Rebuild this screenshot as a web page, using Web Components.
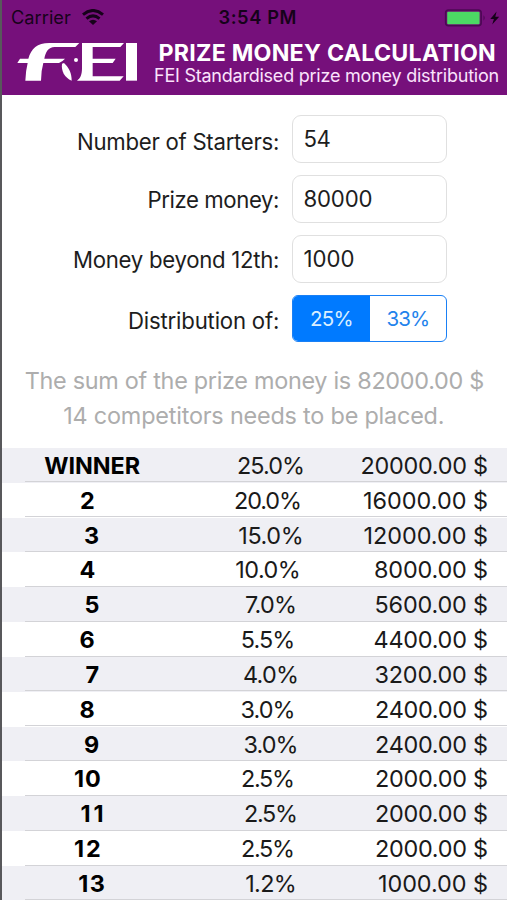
<!DOCTYPE html>
<html lang="en">
<head>
<meta charset="utf-8">
<title>Prize Money Calculation</title>
<style>
html,body{margin:0;padding:0;background:#fff}
body{width:507px;height:900px;overflow:hidden;font-family:Inter,"Liberation Sans",sans-serif}
</style>
</head>
<body>
<prize-app></prize-app>
<script>
const pen = document.createElement('canvas').getContext('2d');

/* A single line of text tracked so that its ink spans exactly `w` pixels. */
class FitText extends HTMLElement {
  connectedCallback() {
    if (this.shadowRoot) return;
    const size = +this.getAttribute('size'), weight = this.getAttribute('weight') || 400;
    const text = this.textContent, n = text.length;
    pen.font = `${weight} ${size}px Inter, "Liberation Sans", sans-serif`;
    const m = pen.measureText(text);
    const ink = m.actualBoundingBoxLeft + m.actualBoundingBoxRight;
    const w = this.hasAttribute('w') ? +this.getAttribute('w') : ink;
    const track = n > 1 ? (w - ink) / (n - 1) : 0;
    this.attachShadow({mode: 'open'}).innerHTML = `<style>
      :host{display:block;flex:none;width:${w}px;white-space:nowrap;font-size:${size}px;font-weight:${weight}}
      span{display:block;width:max-content;margin-left:${m.actualBoundingBoxLeft}px;letter-spacing:${track.toFixed(3)}px;font-kerning:normal}
    </style><span><slot></slot></span>`;
  }
}
customElements.define('fit-text', FitText);

class StatusBar extends HTMLElement {
  connectedCallback() {
    this.attachShadow({mode: 'open'}).innerHTML = `<style>
      :host{display:grid;grid-template-columns:1fr auto 1fr;align-items:center;height:35px;padding:0 6px 0 12px;color:#16021a;line-height:35px}
      .l,.r{display:flex;align-items:center}
      .l{gap:11px}.r{justify-content:flex-end}
      svg{display:block}
      .l svg{margin-top:-1px}
      .t{margin-left:1px}
    </style>
    <div class="l"><fit-text size="18.200" w="59">Carrier</fit-text>
      <svg width="22" height="17" viewBox="0 0 22 17" fill="none" stroke="#16021a" stroke-width="3"><path d="M1 5.600Q11-2.600 21 5.600M4.500 9.600Q11 4.200 17.500 9.600"/><path d="M7 12.200Q11 9.200 15 12.200L11 16Z" fill="#16021a" stroke="none"/></svg></div>
    <fit-text class="t" size="18.300" weight="600" w="77">3:54 PM</fit-text>
    <div class="r"><svg width="57" height="18" viewBox="0 0 57 18">
      <rect x="1.600" y="1.100" width="35.600" height="15.600" rx="3" fill="#6f0e73" stroke="#4c0854" stroke-width="1.500"/>
      <rect x="3.200" y="2.800" width="32.400" height="12.400" rx="1" fill="#4cd964"/>
      <path d="M39.500 6.300q2.400 2.700 0 5.400z" fill="#4c0854"/>
      <path d="M52.600 2.500L46.300 10h3.600l-1.700 5.500L55.200 7.800h-3.900z" fill="#16021a"/>
    </svg></div>`;
  }
}
customElements.define('status-bar', StatusBar);

class FeiLogo extends HTMLElement {
  connectedCallback() {
    this.attachShadow({mode: 'open'}).innerHTML = `<style>:host{display:block;width:122px;height:40px}svg{display:block}</style>
    <svg width="122" height="40" viewBox="48 122 366 120" fill="#fff" role="img" aria-label="FEI">
      <path d="M52 188L60 175H85C94 145 111 128 148 128H238L226 140H164C145 140 137 155 133 175H195Q187 184 177 188H130Q123 212 123 241H76Q77 212 83 188Z"/>
      <path d="M186 190C183 212 194 232 215 241C215 217 206 202 192 188Z"/>
      <circle cx="228" cy="179" r="6"/>
      <path d="M246 128H372L361 140H278V175H347L338 188H278V228H371L359 241H231C242 234 246 221 246 204Z"/>
      <path d="M378 128H411V241H378Z"/>
    </svg>`;
  }
}
customElements.define('fei-logo', FeiLogo);

class TopBanner extends HTMLElement {
  connectedCallback() {
    this.attachShadow({mode: 'open'}).innerHTML = `<style>
      :host{display:block;height:95px;background:#76107b;color:#fff}
      .b{display:flex;padding-left:16px}
      fei-logo{margin-top:6px}
      .x{margin-left:17px;padding-top:5px}
      .x fit-text:first-child{line-height:27px;margin-left:4.500px}
      .x fit-text:last-child{line-height:21px;margin-top:-2px;color:#fbe3fc}
    </style>
    <status-bar></status-bar>
    <div class="b"><fei-logo></fei-logo><div class="x">
      <fit-text size="23.200" weight="650" w="335.500">PRIZE MONEY CALCULATION</fit-text>
      <fit-text size="18" w="343.500">FEI Standardised prize money distribution</fit-text>
    </div></div>`;
  }
}
customElements.define('top-banner', TopBanner);

class FormRow extends HTMLElement {
  connectedCallback() {
    this.attachShadow({mode: 'open'}).innerHTML = `<style>
      :host{display:grid;grid-template-columns:278px 155px;column-gap:14px;height:48px;line-height:48px;color:#1d1d1d}
      .l{display:flex;justify-content:flex-end;position:relative;top:var(--drop,0)}
    </style><div class="l"><slot name="label"></slot></div><slot></slot>`;
  }
}
customElements.define('form-row', FormRow);

class NumberField extends HTMLElement {
  connectedCallback() {
    this.attachShadow({mode: 'open'}).innerHTML = `<style>
      :host{display:block;box-sizing:border-box;height:48px;border:1.500px solid #e0e0e0;border-radius:9px;padding-left:11.500px;line-height:45px;background:#fff}
    </style><slot></slot>`;
  }
}
customElements.define('number-field', NumberField);

class SegmentPicker extends HTMLElement {
  connectedCallback() {
    this.attachShadow({mode: 'open'}).innerHTML = `<style>
      :host{display:grid;grid-template-columns:1fr 1fr;box-sizing:border-box;height:47px;border:1.500px solid #1a80f5;border-radius:6px;overflow:hidden;line-height:45px;color:#1f83ec}
      div{display:flex;justify-content:center}
      .on{background:#007aff;color:#d9efff}
    </style><div class="on"><slot name="on"></slot></div><div><slot name="off"></slot></div>`;
  }
}
customElements.define('segment-picker', SegmentPicker);

class PlaceRow extends HTMLElement {
  connectedCallback() {
    const [place, pct, sum] = this.dataset.v.split('|').map(s => s.split(':'));
    this.attachShadow({mode: 'open'}).innerHTML = `<style>
      :host{display:grid;box-sizing:border-box;height:34.830px;line-height:35px;color:#1a1a1a;
        grid-template-columns:184px 173px 130px;background:linear-gradient(#d3d3d7,#d3d3d7) 25px 100%/100% 1.300px no-repeat,#fff}
      :host(:nth-of-type(odd)){background-color:#efeff4}
      div{display:flex;justify-content:center;position:relative}
      .p{color:#000;left:-4.400px}.c{left:-3px}
      :host(:nth-of-type(odd)) .p,:host(:nth-of-type(odd)) .c{left:0}
      .s{justify-content:flex-end}
    </style>
    <div class="p"><fit-text size="23.400" weight="650" ${place[1] ? `w="${place[1]}"` : ''}>${place[0]}</fit-text></div>
    <div class="c"><fit-text size="23.400" w="${pct[1]}">${pct[0]}%</fit-text></div>
    <div class="s"><fit-text size="23.400" w="${sum[1]}">${sum[0]} $</fit-text></div>`;
  }
}
customElements.define('place-row', PlaceRow);

class PrizeApp extends HTMLElement {
  connectedCallback() {
    const rows = ['WINNER:95.500|25.0:65|20000.00:125.500','2|20.0:65|16000.00:123','3|15.0:62.500|12000.00:122.500','4|10.0:62.500|8000.00:112',
      '5|7.0:49|5600.00:111.500','6|5.5:51.500|4400.00:112.500','7|4.0:53|3200.00:111.500','8|3.0:52|2400.00:111','9|3.0:52|2400.00:111',
      '10:25|2.5:51|2000.00:111','11:21|2.5:51|2000.00:111','12:25|2.5:51|2000.00:111','13:25.500|1.2:48.500|1000.00:108'];
    this.attachShadow({mode: 'open'}).innerHTML = `<style>
      :host{display:block;position:relative;width:507px;height:900px;overflow:hidden;background:#fff}
      :host::after{content:"";position:absolute;left:0;top:0;width:2px;height:900px;background:linear-gradient(90deg,#58585b 75%,#77777a)}
      .form{display:grid;row-gap:12.200px;padding-top:19.500px}
      .sum{display:grid;align-content:start;justify-items:center;height:84.500px;line-height:35px;color:#adadad;margin-top:20.400px}
      .sum fit-text:first-child{margin-left:2px}
    </style>
    <top-banner></top-banner>
    <div class="form">
      <form-row style="--drop:3.500px"><fit-text slot="label" size="22.200" w="200">Number of Starters:</fit-text><number-field><fit-text size="22.200" w="26">54</fit-text></number-field></form-row>
      <form-row style="--drop:1px"><fit-text slot="label" size="22.200" w="129.500">Prize money:</fit-text><number-field><fit-text size="22.200" w="67">80000</fit-text></number-field></form-row>
      <form-row style="--drop:1px"><fit-text slot="label" size="22.200" w="204">Money beyond 12th:</fit-text><number-field><fit-text size="22.200" w="49">1000</fit-text></number-field></form-row>
      <form-row style="--drop:2px"><fit-text slot="label" size="22.200" w="149">Distribution of:</fit-text><segment-picker><fit-text slot="on" size="20.500" w="40.500">25%</fit-text><fit-text slot="off" size="20.500" w="40.500">33%</fit-text></segment-picker></form-row>
    </div>
    <div class="sum"><fit-text size="23.400" w="457.500">The sum of the prize money is 82000.00 $</fit-text><fit-text size="23.400" w="378.500">14 competitors needs to be placed.</fit-text></div>
    ${rows.map(r => `<place-row data-v="${r}"></place-row>`).join('')}`;
  }
}
customElements.define('prize-app', PrizeApp);
</script>
</body>
</html>
